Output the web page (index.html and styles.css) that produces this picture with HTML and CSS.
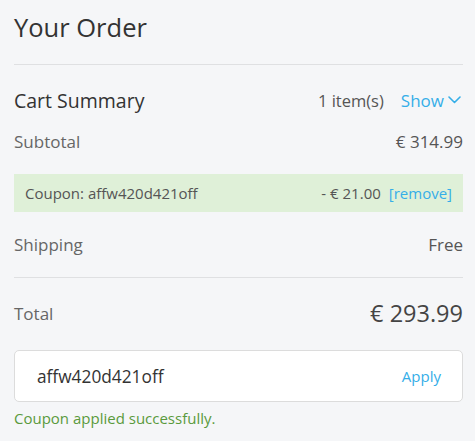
FILE: index.html
```html
<!DOCTYPE html>
<html>
<head>
<meta charset="utf-8">
<link rel="stylesheet" href="styles.css">
</head>
<body>
<div class="order">
  <h1 class="title">Your Order</h1>
  <div class="rule"></div>
  <div class="row summary">
    <span class="summary-label">Cart Summary</span>
    <span class="summary-right">
      <span class="count">1 item(s)</span>
      <span class="show">Show
        <svg class="chev" width="13" height="8" viewBox="0 0 13 8"><path d="M1 1 L6.5 6.5 L12 1" fill="none" stroke="#35aee8" stroke-width="1.6" stroke-linecap="round" stroke-linejoin="round"/></svg>
      </span>
    </span>
  </div>
  <div class="row line">
    <span>Subtotal</span>
    <span class="amount">€ 314.99</span>
  </div>
  <div class="coupon">
    <span>Coupon: affw420d421off</span>
    <span class="coupon-right"><span class="amount">- € 21.00</span><span class="remove">[remove]</span></span>
  </div>
  <div class="row line">
    <span>Shipping</span>
    <span class="amount">Free</span>
  </div>
  <div class="rule"></div>
  <div class="row total">
    <span>Total</span>
    <span class="total-amount">€ 293.99</span>
  </div>
  <div class="code-box">
    <span class="code">affw420d421off</span>
    <span class="apply">Apply</span>
  </div>
  <div class="success">Coupon applied successfully.</div>
</div>
</body>
</html>
```
FILE: styles.css
```css
html, body {
  margin: 0;
  padding: 0;
  background: #f5f6f8;
}
body {
  font-family: "Open Sans", "Lato", sans-serif;
  color: #555;
}
.order {
  padding: 12px 12px 0 14px;
}
.title {
  margin: 0;
  font-size: 25.5px;
  font-weight: 400;
  color: #333;
  line-height: 30px;
}
.rule {
  height: 1px;
  background: #dfe0e2;
}
.order > .rule:first-of-type {
  margin-top: 22px;
}
.row {
  display: flex;
  justify-content: space-between;
  align-items: center;
}
.summary {
  margin-top: 22px;
  height: 26px;
}
.summary-label {
  font-size: 19.5px;
  color: #333;
}
.summary-right {
  display: flex;
  align-items: center;
}
.count {
  font-size: 16.5px;
  color: #555;
}
.show {
  margin-left: 17px;
  font-size: 17px;
  color: #35aee8;
  display: flex;
  align-items: center;
}
.chev {
  margin-left: 4px;
  margin-right: 2px;
}
.line {
  font-size: 17px;
  color: #666;
  height: 22px;
}
.summary + .line {
  margin-top: 17px;
}
.line .amount {
  color: #555;
}
.coupon {
  margin-top: 22px;
  height: 38px;
  background: #dff0d8;
  display: flex;
  justify-content: space-between;
  align-items: center;
  padding: 0 11px;
  font-size: 15px;
  color: #555;
}
.coupon-right {
  display: flex;
  gap: 8px;
}
.remove {
  color: #35aee8;
}
.coupon + .line {
  margin-top: 21px;
  margin-bottom: 22px;
}
.total {
  margin-top: 22px;
  height: 26px;
  font-size: 17px;
  color: #666;
}
.total-amount {
  font-size: 23.5px;
  color: #444;
}
.code-box {
  margin-top: 24px;
  height: 52px;
  box-sizing: border-box;
  background: #fff;
  border: 1px solid #dcdcdc;
  border-radius: 5px;
  display: flex;
  justify-content: space-between;
  align-items: center;
  padding: 0 21px 0 22px;
}
.code {
  font-size: 17.3px;
  color: #333;
}
.apply {
  font-size: 15px;
  color: #35aee8;
}
.success {
  margin-top: 6px;
  font-size: 15px;
  color: #5a9a3c;
}
```
